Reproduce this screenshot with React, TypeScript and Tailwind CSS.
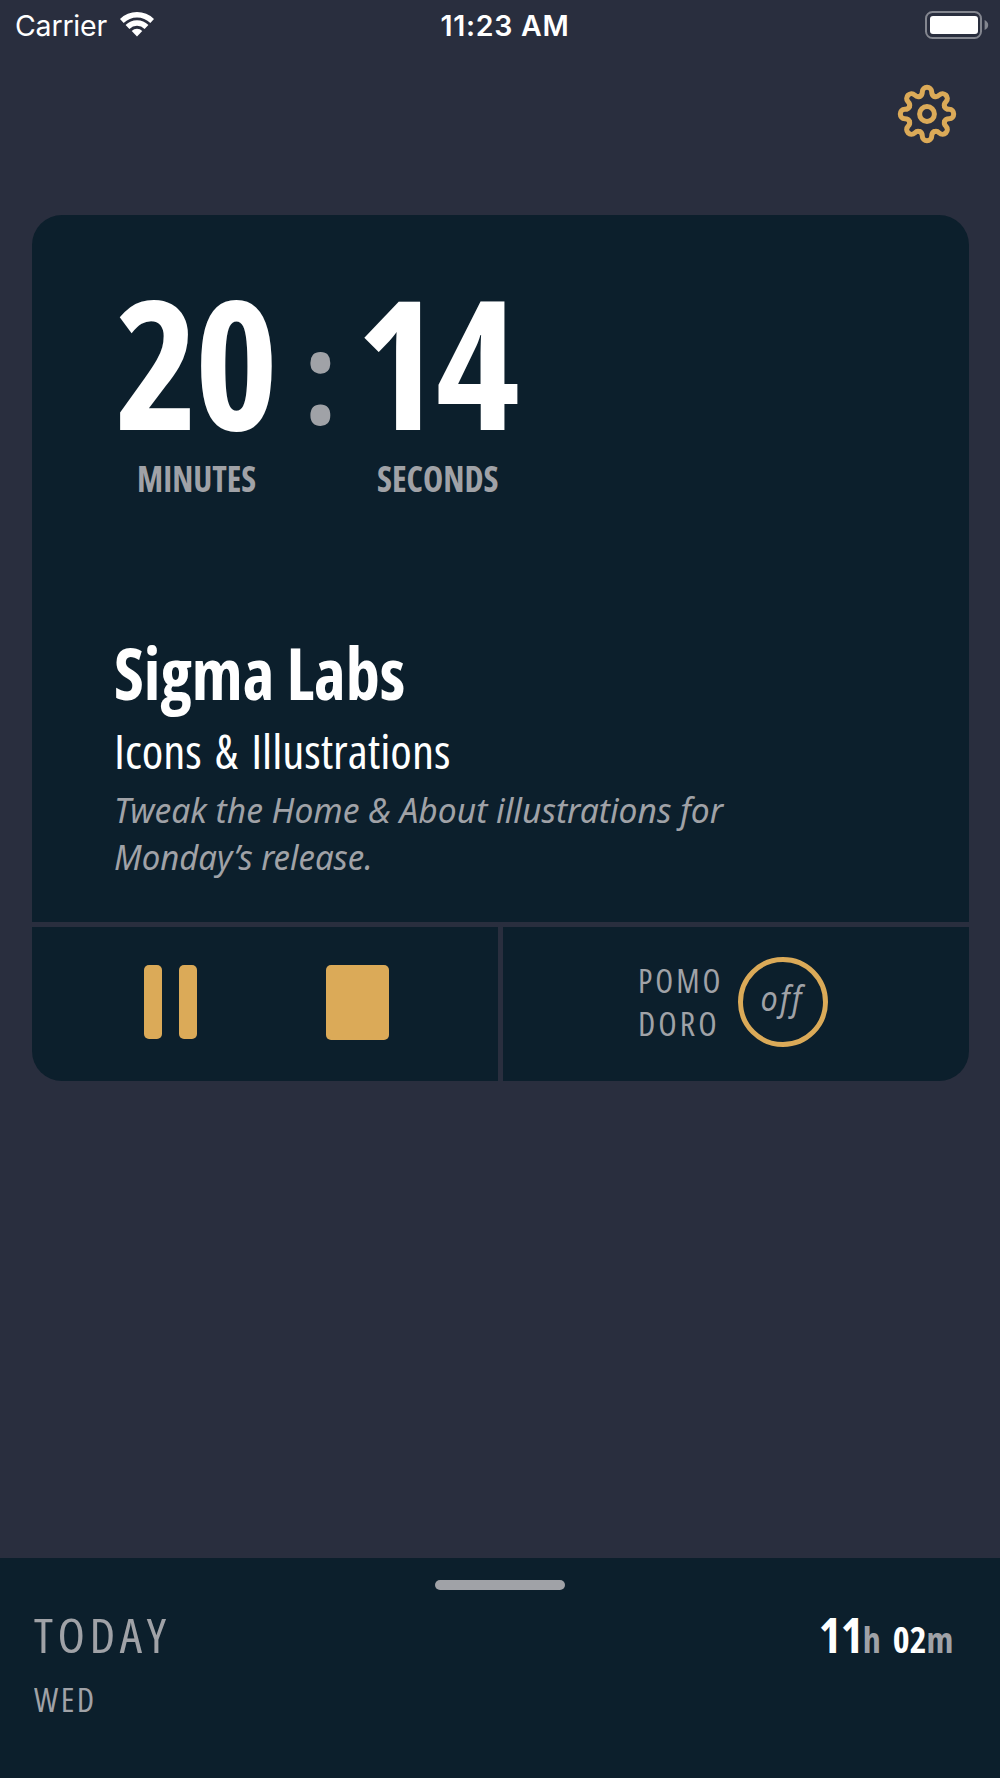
const gearTooth =
  "M-7.3 -17.6C-4.6 -18.7 -4.7 -20.5 -4.7 -22.2C-4.7 -25 -2.5 -26.7 0 -26.7C2.5 -26.7 4.7 -25 4.7 -22.2C4.7 -20.5 4.6 -18.7 7.3 -17.6";

function GearIcon() {
  return (
    <svg width="60" height="60" viewBox="-30 -30 60 60" fill="none" stroke="#dbaa58" strokeWidth="5" strokeLinecap="round">
      {[0, 45, 90, 135, 180, 225, 270, 315].map((angle) => (
        <path key={angle} d={gearTooth} transform={`rotate(${angle})`} />
      ))}
      <circle r="7.4" />
    </svg>
  );
}

function WifiIcon() {
  return (
    <svg width="36" height="26" viewBox="0 0 36 26" fill="#fff">
      <path d="M1 6.9A24.5 24.5 0 0 1 35 6.9L31.3 10.9A19 19 0 0 0 4.7 10.9Z" />
      <path d="M6.6 12.9A16.2 16.2 0 0 1 29.4 12.9L25.6 16.9A11 11 0 0 0 10.4 16.9Z" />
      <path d="M12.7 18.9A7.8 7.8 0 0 1 23.3 18.9L18 24.6Z" />
    </svg>
  );
}

function BatteryIcon() {
  return (
    <svg width="64" height="28" viewBox="0 0 64 28">
      <rect x="1" y="1" width="55" height="26" rx="6.5" fill="none" stroke="#83868f" strokeWidth="2" />
      <rect x="5" y="5" width="48" height="18" rx="3" fill="#fff" />
      <path d="M59.6 9C62 10 63.2 12 63.2 14C63.2 16 62 18 59.6 19Z" fill="#83868f" />
    </svg>
  );
}

function StatusBar() {
  return (
    <div className="grid h-[50px] grid-cols-3 items-start font-['Inter',sans-serif] text-[28.5px] leading-[51px] text-white">
      <div className="flex pl-[15px]">
        <span className="tracking-[-0.2px]">Carrier</span>
        <div className="ml-[12px] pt-[12px]">
          <WifiIcon />
        </div>
      </div>
      <div className="flex justify-center pl-[10px] font-semibold tracking-[0.7px]">11:23 AM</div>
      <div className="flex justify-end pt-[10.5px] pr-[11px]">
        <BatteryIcon />
      </div>
    </div>
  );
}

function Timer() {
  return (
    <div className="flex font-bold text-[#a0a2a7] [font-stretch:75%]">
      <div className="w-[168px]">
        <div className="text-[179px] leading-[141px] tracking-[-4.5px] text-white">20</div>
        <div className="mt-[26px] pl-[22px] text-[35.5px] leading-[42px]">
          <span className="inline-block origin-left scale-x-[0.955]">MINUTES</span>
        </div>
      </div>
      <div className="w-[73px] pt-[14px] pl-[20.5px] text-[130px] leading-[141px]">:</div>
      <div className="w-[168px]">
        <div className="text-[179px] leading-[141px] tracking-[-4.5px] text-white">14</div>
        <div className="mt-[26px] pl-[21px] text-[35.5px] leading-[42px]">
          <span className="inline-block origin-left scale-x-[0.962]">SECONDS</span>
        </div>
      </div>
    </div>
  );
}

function Project() {
  return (
    <div>
      <div className="mt-[134px] -ml-[1.5px] text-[71px] leading-[80px] font-bold text-white [font-stretch:75%]">
        <span className="inline-block origin-left scale-x-[0.96]">Sigma Labs</span>
      </div>
      <div className="mt-[8px] -ml-[1px] text-[46.7px] leading-[60px] text-white [font-stretch:75%] [word-spacing:4px]">
        <span className="inline-block origin-left scale-x-[1.048]">Icons &amp; Illustrations</span>
      </div>
      <div className="mt-[5px] -ml-[1px] font-['Noto_Sans',sans-serif] text-[35px] leading-[47px] text-[#a0a2a7] italic">
        <div>
          <span className="inline-block origin-left scale-x-[0.959]">Tweak the Home &amp; About illustrations for</span>
        </div>
        <div>
          <span className="inline-block origin-left scale-x-[0.94]">Monday’s release.</span>
        </div>
      </div>
    </div>
  );
}

function Controls() {
  return (
    <div className="flex h-[154px] gap-[5px]">
      <div className="flex w-[466.5px] bg-[#0c1f2c] pt-[37.5px] pl-[112.5px]">
        <div className="flex gap-[17px]">
          <div className="h-[74px] w-[18px] rounded-[5px] bg-[#dbaa58]" />
          <div className="h-[74px] w-[18px] rounded-[5px] bg-[#dbaa58]" />
        </div>
        <div className="ml-[129px] h-[75.5px] w-[63px] rounded-[5px] bg-[#dbaa58]" />
      </div>
      <div className="flex flex-1 bg-[#0c1f2c] pt-[30px] pl-[135px] text-[#a0a2a7]">
        <div className="mt-[2px] w-[100px] text-[33.5px] leading-[43px] tracking-[3px] [font-stretch:75%]">
          <div>
            <span className="inline-block origin-left scale-x-[0.98]">POMO</span>
          </div>
          <div>
            <span className="inline-block origin-left scale-x-[1.01]">DORO</span>
          </div>
        </div>
        <div className="flex size-[90px] justify-center rounded-full border-[5px] border-[#dbaa58] pr-px font-['Noto_Sans',sans-serif] text-[34px] leading-[73px] tracking-[2.5px] italic">
          <span className="scale-x-90">off</span>
        </div>
      </div>
    </div>
  );
}

function TodayPanel() {
  return (
    <div className="flex h-[220px] flex-col bg-[#0c1f2c] pt-[22px] text-[#a0a2a7] [font-stretch:75%]">
      <div className="h-[9.5px] w-[130px] self-center rounded-full bg-[#a0a2a7]" />
      <div className="mt-[15.5px] flex justify-between pr-[46.5px] pl-[34px] leading-[60px]">
        <div className="text-[47px] tracking-[4.3px]">
          <span className="inline-block origin-left scale-x-[1.07]">TODAY</span>
        </div>
        <div className="flex items-baseline text-[36px] font-bold">
          <span className="text-[48px] tracking-[-0.5px] text-white">11</span>
          <span>h</span>
          <span className="ml-[12px] text-white">02</span>
          <span>m</span>
        </div>
      </div>
      <div className="mt-[8px] pl-[34px] text-[33px] leading-[44px] tracking-[2.4px]">
        <span className="inline-block origin-left scale-x-[1.03]">WED</span>
      </div>
    </div>
  );
}

export default function App() {
  return (
    <div className="flex h-[1778px] w-[1000px] flex-col overflow-hidden bg-[#292e3e] font-['Open_Sans',sans-serif] whitespace-nowrap">
      <StatusBar />
      <div className="flex h-[165px] justify-end pt-[33.5px] pr-[43px]">
        <GearIcon />
      </div>
      <div className="mx-[31.5px] flex h-[866px] flex-col gap-[5px] overflow-hidden rounded-[30px]">
        <div className="h-[707px] bg-[#0c1f2c] pt-[75px] pl-[83.5px]">
          <Timer />
          <Project />
        </div>
        <Controls />
      </div>
      <div className="flex-1" />
      <TodayPanel />
    </div>
  );
}
